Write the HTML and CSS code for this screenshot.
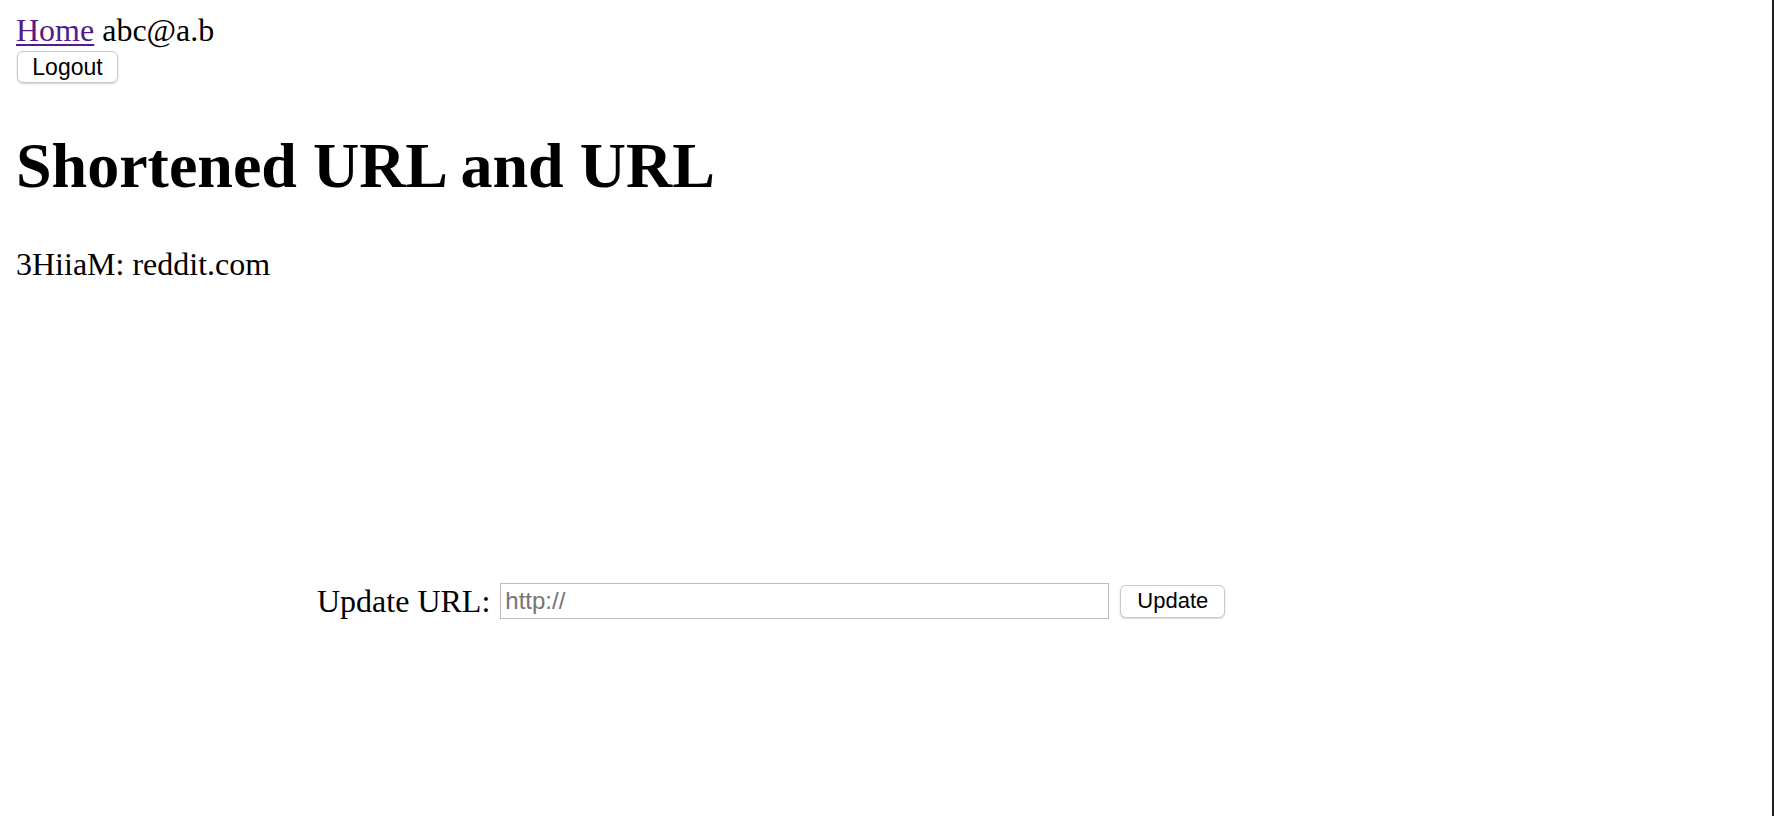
FILE: index.html
```html
<!DOCTYPE html>
<html>
<head>
<meta charset="utf-8">
<title>Shortened URL and URL</title>
<link rel="stylesheet" href="styles.css">
</head>
<body>
<div class="userbar"><a class="home" href="#">Home</a> abc@a.b</div>
<form class="logout-form"><button class="btn logout" type="button">Logout</button></form>
<h1 class="title">Shortened URL and URL</h1>
<p class="pair">3HiiaM: reddit.com</p>
<form class="update-form">
  <label class="update-label" for="url">Update URL:</label>
  <input class="url-input" id="url" type="text" placeholder="http://">
  <button class="btn update" type="button">Update</button>
</form>
<div class="edge"></div>
</body>
</html>
```
FILE: styles.css
```css
html, body {
  background: #ffffff;
}
body {
  margin: 0;
  padding: 12px 0 0 16px;
  font-family: "Liberation Serif", "Times New Roman", serif;
  font-size: 32px;
  color: #000;
}
.userbar {
  line-height: 36px;
  height: 36px;
}
.home {
  color: #551a8b;
  text-decoration: underline;
  text-decoration-thickness: 2px;
  text-underline-offset: 3px;
}
.logout-form {
  margin: 3px 0 0 1px;
}
.btn {
  font-family: "Liberation Sans", Arial, Helvetica, sans-serif;
  font-size: 23px;
  color: #000;
  background: #ffffff;
  border: 1px solid #c9c9c9;
  border-radius: 6px;
  box-shadow: 0 1px 2px rgba(0,0,0,0.18);
  padding: 0;
  margin: 0;
  display: block;
}
.logout {
  width: 101px;
  height: 32px;
}
.title {
  font-size: 64px;
  font-weight: bold;
  line-height: 74px;
  margin: 46px 0 0 0;
}
.pair {
  line-height: 36px;
  margin: 43px 0 0 0;
}
.update-form {
  display: flex;
  align-items: center;
  margin: 301px 0 0 301px;
  height: 36px;
}
.update-label {
  line-height: 36px;
  margin-right: 10px;
}
.url-input {
  box-sizing: border-box;
  width: 609px;
  height: 36px;
  border: 1px solid #bdbdbd;
  border-radius: 0;
  padding: 0 4px;
  margin: 0;
  font-family: "Liberation Sans", Arial, Helvetica, sans-serif;
  font-size: 24px;
  color: #000;
  outline: none;
}
.url-input::placeholder {
  color: #757575;
}
.update {
  width: 105px;
  height: 33px;
  margin-left: 11px;
  font-size: 22px;
}
.edge {
  position: fixed;
  top: 0;
  right: 0;
  width: 2px;
  height: 100%;
  background: #1e1e1e;
}
```
